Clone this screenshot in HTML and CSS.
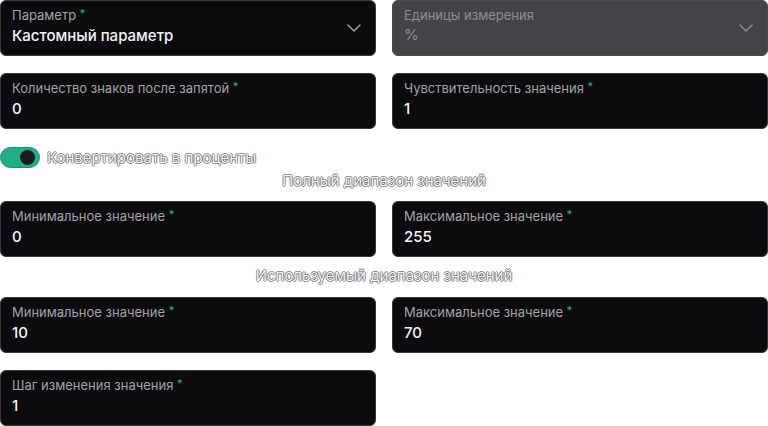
FILE: index.html
```html
<!DOCTYPE html>
<html lang="ru">
<head>
<meta charset="utf-8">
<meta name="viewport" content="width=device-width, initial-scale=1">
<link rel="stylesheet" href="styles.css">
</head>
<body>

<form class="param-form">

  <div class="row row--first">
    <label class="field field--select">
      <span class="field__label">Параметр <i class="req">*</i></span>
      <span class="field__value">Кастомный параметр</span>
      <svg class="field__chevron" width="14" height="8" viewBox="0 0 14 8"><path d="M1 1l6 6 6-6" fill="none" stroke="currentColor" stroke-width="1.5" stroke-linecap="round" stroke-linejoin="round"/></svg>
    </label>
    <label class="field field--select field--disabled">
      <span class="field__label">Единицы измерения</span>
      <span class="field__value">%</span>
      <svg class="field__chevron" width="14" height="8" viewBox="0 0 14 8"><path d="M1 1l6 6 6-6" fill="none" stroke="currentColor" stroke-width="1.5" stroke-linecap="round" stroke-linejoin="round"/></svg>
    </label>
  </div>

  <div class="row">
    <label class="field">
      <span class="field__label">Количество знаков после запятой <i class="req">*</i></span>
      <span class="field__value">0</span>
    </label>
    <label class="field">
      <span class="field__label">Чувствительность значения <i class="req">*</i></span>
      <span class="field__value">1</span>
    </label>
  </div>

  <label class="switch">
    <span class="switch__track"><span class="switch__knob"></span></span>
    <span class="switch__text">Конвертировать в проценты</span>
  </label>

  <h3 class="section-title section-title--full">Полный диапазон значений</h3>

  <div class="row">
    <label class="field">
      <span class="field__label">Минимальное значение <i class="req">*</i></span>
      <span class="field__value">0</span>
    </label>
    <label class="field">
      <span class="field__label">Максимальное значение <i class="req">*</i></span>
      <span class="field__value">255</span>
    </label>
  </div>

  <h3 class="section-title section-title--used">Используемый диапазон значений</h3>

  <div class="row">
    <label class="field">
      <span class="field__label">Минимальное значение <i class="req">*</i></span>
      <span class="field__value">10</span>
    </label>
    <label class="field">
      <span class="field__label">Максимальное значение <i class="req">*</i></span>
      <span class="field__value">70</span>
    </label>
  </div>

  <div class="row">
    <label class="field">
      <span class="field__label">Шаг изменения значения <i class="req">*</i></span>
      <span class="field__value">1</span>
    </label>
  </div>

</form>

</body>
</html>
```

FILE: styles.css
```css
* {box-sizing: border-box;}

body {
  margin: 0;
  background: #fff;
  font-family: Inter, "Noto Sans", sans-serif;
  color: #fff;
}

.param-form {
  display: flex;
  flex-direction: column;
  width: 768px;
}

/* two columns of inputs */
.row {
  display: grid;
  grid-template-columns: 1fr 1fr;
  column-gap: 16px;
  margin-top: 17px;
}
.row--first {
  margin-top: 0;
}
.row + .row {
  margin-top: 17px;
}

.field {
  position: relative;
  display: flex;
  flex-direction: column;
  height: 56px;
  padding: 6px 11px 0;
  background: #0c0c0e;
  border: 1px solid #3c3c40;
  border-radius: 6px;
}

.field__label {
  font-size: 13px;
  line-height: 16px;
  color: #a2a2a7;
}

.req {
  font-style: normal;
  color: #1fb487;
  font-size: 11px;
  position: relative;
  top: -3px;
}

.field__value {
  margin-top: 2px;
  font-size: 15px;
  line-height: 20px;
  font-weight: 500;
  color: #f5f5f5;
}

.field__chevron {
  position: absolute;
  right: 14px;
  top: 23px;
  color: #a0a0a5;
}

.field--disabled {
  background: #434448;
  border-color: #4a4b4f;
}
.field--disabled .field__label {
  color: #8d8e92;
}
.field--disabled .field__value {
  color: #8e8f93;
  font-weight: 400;
}
.field--disabled .field__chevron {
  color: #8a8b8f;
}

/* toggle */
.switch {
  display: flex;
  align-items: center;
  gap: 7px;
  margin-top: 18px;
  height: 21px;
}
.switch__track {
  display: flex;
  align-items: center;
  justify-content: flex-end;
  width: 40px;
  height: 21px;
  padding: 0 4px;
  background: #1fae85;
  border: 1px solid #17946f;
  border-radius: 11px;
}
.switch__knob {
  width: 15px;
  height: 15px;
  border-radius: 50%;
  background: #1c1c1f;
}

/* light text on the white page: glyph edges show dark */
.switch__text,
.section-title {
  font-size: 15px;
  line-height: 18px;
  color: #f7f7f7;
  text-shadow:
    1px 0 0 rgba(40, 40, 40, .5),
    -1px 0 0 rgba(40, 40, 40, .5),
    0 1px 0 rgba(40, 40, 40, .5),
    0 -1px 0 rgba(40, 40, 40, .5);
}

.section-title {
  margin: 0;
  font-weight: 400;
  text-align: center;
}
.section-title--full {
  margin-top: 4px;
  margin-bottom: -6px;
}
.section-title--used {
  margin-top: 10px;
  margin-bottom: -5px;
}
```
